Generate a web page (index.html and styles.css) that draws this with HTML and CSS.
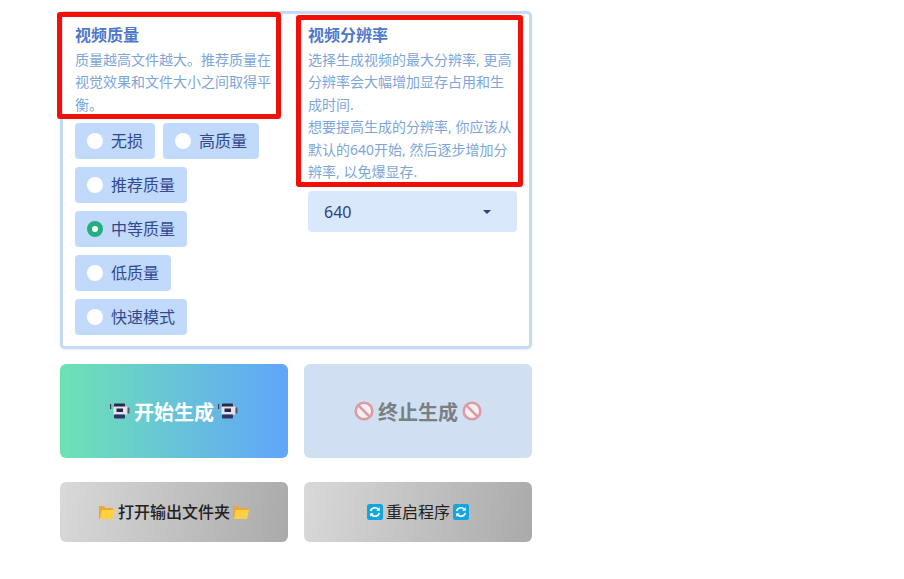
FILE: index.html
```html
<!DOCTYPE html>
<html lang="en">
<head>
    <meta charset="UTF-8">
    <meta name="viewport" content="width=device-width, initial-scale=1.0">
    <title>视频生成</title>
    <link rel="stylesheet" href="styles.css">
</head>
<body>
    <svg class="icon-defs" aria-hidden="true">
        <symbol id="icon-camera" viewBox="0 0 20 20">
            <rect x="0" y="3" width="1.2" height="5" fill="#3a3a4a"/>
            <rect x="1" y="4.5" width="4" height="1.2" fill="#9aa0a8"/>
            <rect x="4" y="2.5" width="11" height="4" rx="1" fill="#2a2a4e"/>
            <rect x="3.5" y="5.5" width="14" height="8" rx="1" fill="#e6e2e6"/>
            <rect x="17.5" y="6.5" width="2" height="6" rx=".6" fill="#55586a"/>
            <rect x="6.5" y="7.5" width="6.5" height="3.5" fill="#26264a"/>
            <rect x="4" y="13.5" width="11" height="4" rx="1" fill="#2f3566"/>
        </symbol>
        <symbol id="icon-stop" viewBox="0 0 20 20">
            <circle cx="10" cy="10" r="8.3" fill="#f2f0f2" stroke="#dd9aa2" stroke-width="2.6"/>
            <line x1="4.4" y1="4.4" x2="15.6" y2="15.6" stroke="#dd9aa2" stroke-width="2.6"/>
        </symbol>
        <symbol id="icon-folder" viewBox="0 0 16 16">
            <path d="M0 2h5l1.5 2H14v2H3.5L1.5 15H0z" fill="#f0a830"/>
            <path d="M3 6h13l-2 9H.8z" fill="#fdd045"/>
        </symbol>
        <symbol id="icon-restart" viewBox="0 0 16 16">
            <rect width="16" height="16" rx="2.5" fill="#12a5e0"/>
            <path d="M3.6 7a4.5 4.5 0 0 1 7.8-1.6" fill="none" stroke="#fff" stroke-width="1.7"/>
            <path d="M12.8 3.2v3.6H9.2z" fill="#fff"/>
            <path d="M12.4 9a4.5 4.5 0 0 1-7.8 1.6" fill="none" stroke="#fff" stroke-width="1.7"/>
            <path d="M3.2 12.8V9.2h3.6z" fill="#fff"/>
        </symbol>
    </svg>

    <div class="page">
        <div class="panel">
            <div class="field">
                <h3 class="field-title">视频质量</h3>
                <p class="field-info">质量越高文件越大。推荐质量在视觉效果和文件大小之间取得平衡。</p>
                <div class="radio-group">
                    <label class="radio"><input type="radio" name="quality"><span>无损</span></label>
                    <label class="radio"><input type="radio" name="quality"><span>高质量</span></label>
                    <label class="radio"><input type="radio" name="quality"><span>推荐质量</span></label>
                    <label class="radio"><input type="radio" name="quality" checked><span>中等质量</span></label>
                    <label class="radio"><input type="radio" name="quality"><span>低质量</span></label>
                    <label class="radio"><input type="radio" name="quality"><span>快速模式</span></label>
                </div>
            </div>
            <div class="field">
                <h3 class="field-title">视频分辨率</h3>
                <p class="field-info">选择生成视频的最大分辨率, 更高分辨率会大幅增加显存占用和生成时间.<br>想要提高生成的分辨率, 你应该从默认的640开始, 然后逐步增加分辨率, 以免爆显存.</p>
                <div class="dropdown">
                    <span>640</span>
                    <svg class="caret" width="8" height="4" viewBox="0 0 10 5"><path d="M0 0h10L5 5z"/></svg>
                </div>
            </div>
            <div class="mark mark-left"></div>
            <div class="mark mark-right"></div>
        </div>

        <div class="button-row">
            <button class="btn btn-large btn-start" type="button">
                <svg class="icon-large"><use href="#icon-camera"/></svg>开始生成<svg class="icon-large"><use href="#icon-camera"/></svg>
            </button>
            <button class="btn btn-large btn-stop" type="button" disabled>
                <svg class="icon-large"><use href="#icon-stop"/></svg>终止生成<svg class="icon-large"><use href="#icon-stop"/></svg>
            </button>
        </div>

        <div class="button-row">
            <button class="btn btn-small" type="button">
                <svg class="icon-small"><use href="#icon-folder"/></svg><span class="btn-label">打开输出文件夹</span><svg class="icon-small"><use href="#icon-folder"/></svg>
            </button>
            <button class="btn btn-small btn-plain" type="button">
                <svg class="icon-small"><use href="#icon-restart"/></svg><span class="btn-label">重启程序</span><svg class="icon-small"><use href="#icon-restart"/></svg>
            </button>
        </div>
    </div>
</body>
</html>
```

FILE: styles.css
```css
* {
    box-sizing: border-box;
}
body {
    margin: 0;
    background: white;
    font-family: "Noto Sans", "Noto Sans CJK SC", sans-serif;
}
.icon-defs {
    display: none;
}
.page {
    width: 472px;
    margin: 11px 0 0 60px;
}
.panel {
    position: relative;
    display: flex;
    gap: 24px;
    height: 338px;
    padding: 12px;
    border: 3px solid #c6daf2;
    border-radius: 5px;
    background: white;
    box-shadow: 0 1px 3px rgba(120,150,200,0.2);
}
.field {
    width: 209px;
}
.field-title {
    margin: 0 0 4px;
    font-size: 16px;
    line-height: 19px;
    font-weight: 700;
    color: #4f78cc;
}
.field-info {
    margin: 0 0 7px;
    font-size: 14px;
    line-height: 22.4px;
    color: #7ea5da;
}
.radio-group {
    display: flex;
    flex-wrap: wrap;
    gap: 8px;
}
.radio {
    display: flex;
    align-items: center;
    gap: 8px;
    height: 36px;
    padding: 0 12px;
    border-radius: 4px;
    background: #c1d9fb;
    font-size: 16px;
    color: #33498f;
}
.radio span {
    margin-bottom: 2px;
}
.radio input {
    appearance: none;
    width: 16px;
    height: 16px;
    margin: 0;
    border-radius: 50%;
    background: white;
}
.radio input:checked {
    border: 5px solid #22b07f;
}
.dropdown {
    display: flex;
    align-items: center;
    justify-content: space-between;
    height: 41px;
    margin-top: 8px;
    padding: 0 26px 0 16px;
    border-radius: 4px;
    background: #dae8fb;
    font-size: 16px;
    color: #2f3f80;
}
.caret {
    fill: #2f3f80;
}
.mark {
    position: absolute;
    border: 5px solid #f01008;
    border-radius: 3px;
}
.mark-left {
    left: -6px;
    top: -2px;
    width: 224px;
    height: 107px;
}
.mark-right {
    left: 233px;
    top: 1px;
    width: 227px;
    height: 172px;
}
.button-row {
    display: flex;
    gap: 16px;
    margin-top: 15px;
}
.button-row + .button-row {
    margin-top: 24px;
}
.btn {
    display: flex;
    align-items: center;
    justify-content: center;
    flex: 1;
    border: none;
    border-radius: 6px;
    font-family: inherit;
    cursor: pointer;
}
.btn-large {
    gap: 4px;
    height: 94px;
    font-size: 20px;
    font-weight: 700;
}
.btn-start {
    background: linear-gradient(90deg, #6ee2b4, #60a5fa);
    color: white;
}
.btn-stop {
    background: #d0e0f2;
    color: #7a7f86;
}
.btn-small {
    gap: 3px;
    height: 60px;
    background: linear-gradient(100deg, #d9d9d9, #aaaaaa);
    font-size: 16px;
    font-weight: 500;
    color: #222;
}
.btn-label {
    margin-bottom: 2px;
}
.btn-plain {
    font-weight: 400;
}
.icon-large {
    width: 20px;
    height: 20px;
}
.icon-small {
    width: 16px;
    height: 16px;
}
```
